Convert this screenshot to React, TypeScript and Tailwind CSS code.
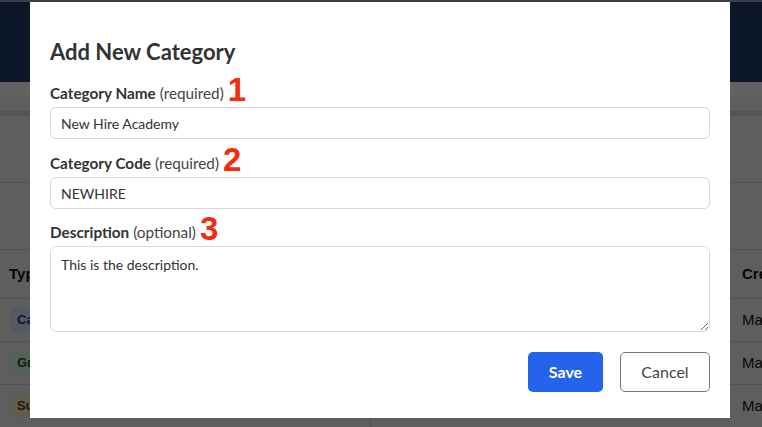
import React from "react";

const rows = [
  { type: "Category", badge: "bg-[#dbeafe] text-[#1e3a8a]", by: "Marcus Lee" },
  { type: "Group", badge: "bg-[#dcfce7] text-[#14532d]", by: "Maria Gomez" },
  { type: "Subcategory", badge: "bg-[#fef3c7] text-[#7c2d12]", by: "Mark Davis" },
];

function Field({
  label,
  note,
  num,
  className,
  children,
}: {
  label: string;
  note: string;
  num: string;
  className?: string;
  children: React.ReactNode;
}) {
  return (
    <div className={className}>
      <div className="h-5 mb-1 text-[15.3px] leading-5 text-[#333]">
        <span className="font-bold">{label}</span> <span className="text-[#444]">({note})</span>
        <span className="relative top-[2px] ml-[4px] font-['Liberation_Sans',Arial,sans-serif] text-[33px] leading-[0] font-bold text-[#f52a0e]">
          {num}
        </span>
      </div>
      {children}
    </div>
  );
}

export default function App() {
  return (
    <div className="relative w-[762px] h-[427px] overflow-hidden bg-[#f7f7f7] font-['Liberation_Sans',Arial,sans-serif]">
      {/* page behind the modal */}
      <div className="h-[2px] bg-[#9e9eb2]" />
      <div className="h-[80px] bg-[#1f3a6b]" />
      <div className="h-[15px] bg-white" />
      <div className="h-[14px] bg-[#f7f7f7]" />
      <div className="h-[5px] bg-[#dcdcdc]" />
      <div className="h-[67px] border-b border-[#d4d4d4]" />
      <div className="h-[67px] border-b border-[#d4d4d4]" />
      <div className="grid grid-cols-[370px_1fr_32px]">
        <div className="h-[49px] flex items-center px-[9px] text-[15px] font-bold text-[#111] border-b border-[#d4d4d4]">
          Type
        </div>
        <div className="border-b border-[#d4d4d4]" />
        <div className="h-[49px] flex items-center pl-[12px] text-[15px] font-bold text-[#111] border-b border-[#d4d4d4] whitespace-nowrap overflow-hidden">
          Created
        </div>
        {rows.map((r) => (
          <React.Fragment key={r.type}>
            <div className="h-[43px] flex items-center px-[10px] border-b border-[#d4d4d4]">
              <span className={`px-[7px] py-[2px] rounded-md text-[13px] font-bold ${r.badge}`}>{r.type}</span>
            </div>
            <div className="border-b border-l border-[#d4d4d4]" />
            <div className="h-[43px] flex items-center pl-[12px] text-[15px] text-[#111] border-b border-[#d4d4d4] whitespace-nowrap overflow-hidden">
              {r.by}
            </div>
          </React.Fragment>
        ))}
      </div>

      {/* overlay + modal */}
      <div className="absolute inset-0 bg-black/[0.62] pt-[2px] pl-[30px] font-['Lato',sans-serif]">
        <div className="w-[700px] bg-white px-5 pt-[36px] pb-[26px]">
          <h2 className="text-[22px] leading-7 font-bold text-[#333] mb-[17px]">Add New Category</h2>

          <Field label="Category Name" note="required" num="1">
            <input
              defaultValue="New Hire Academy"
              className="w-full h-8 px-2.5 rounded-md border border-[#d9d9d9] text-sm text-[#333] outline-none"
            />
          </Field>

          <Field label="Category Code" note="required" num="2" className="mt-[14px]">
            <input
              defaultValue="NEWHIRE"
              className="w-full h-8 px-2.5 rounded-md border border-[#d9d9d9] text-sm text-[#333] outline-none"
            />
          </Field>

          <Field label="Description" note="optional" num="3" className="mt-[13px]">
            <textarea
              defaultValue="This is the description."
              className="block w-full h-[86px] px-2.5 py-2 rounded-md border border-[#d9d9d9] text-sm leading-5 text-[#333] outline-none"
            />
          </Field>

          <div className="mt-5 flex justify-end gap-[17px]">
            <button className="w-[75px] h-10 rounded-[5px] bg-[#2563eb] text-white text-base font-bold">Save</button>
            <button className="w-[90px] h-10 rounded-[5px] border border-[#777] text-[#444] text-base">Cancel</button>
          </div>
        </div>
      </div>
    </div>
  );
}
